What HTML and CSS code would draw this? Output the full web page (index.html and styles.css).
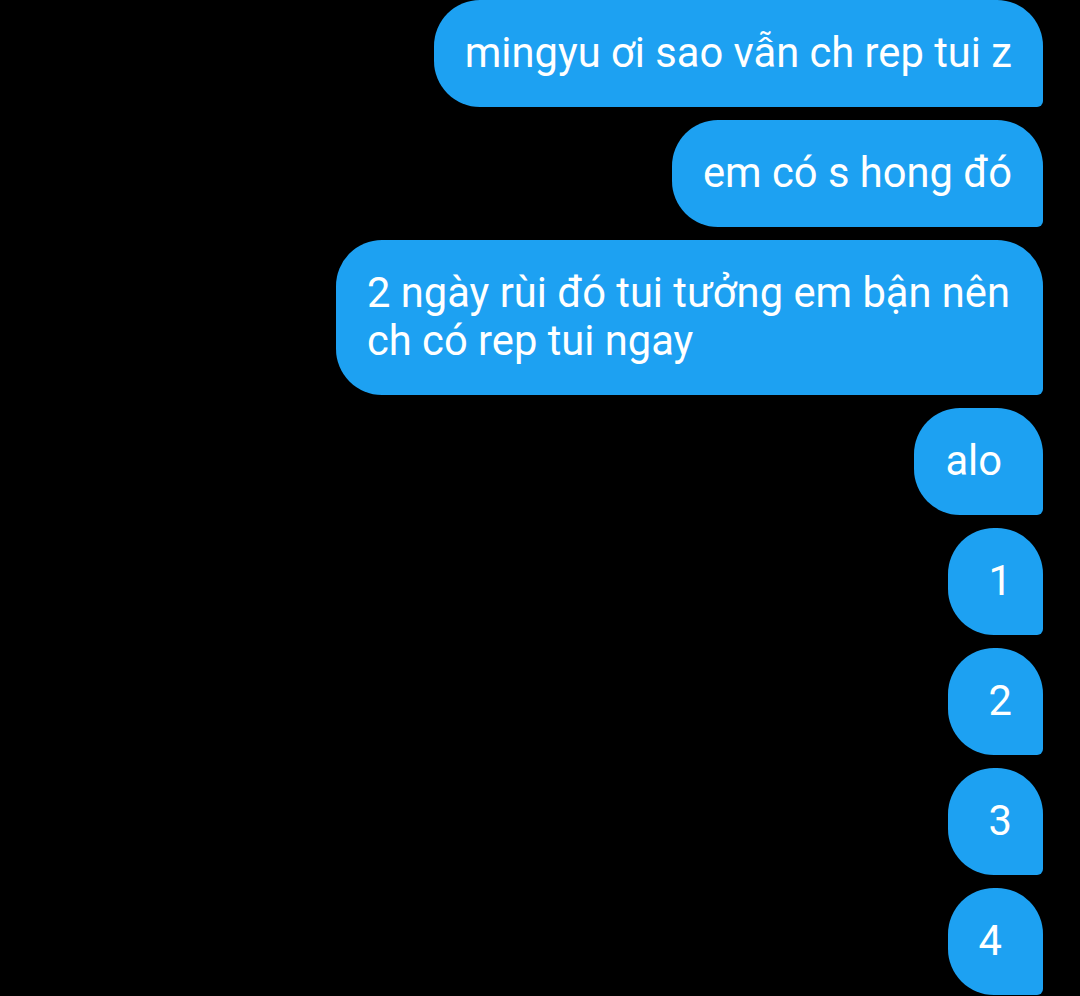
FILE: index.html
```html
<!DOCTYPE html>
<html lang="vi">
<head>
<meta charset="utf-8">
<link rel="stylesheet" href="styles.css">
</head>
<body>
<div class="chat">
  <div class="bubble">mingyu ơi sao vẫn ch rep tui z</div>
  <div class="bubble">em có s hong đó</div>
  <div class="bubble">2 ngày rùi đó tui tưởng em bận nên ch có rep tui ngay</div>
  <div class="bubble trail">alo</div>
  <div class="bubble lead">1</div>
  <div class="bubble lead">2</div>
  <div class="bubble lead">3</div>
  <div class="bubble trail">4</div>
</div>
</body>
</html>
```

FILE: styles.css
```css
html, body {
  margin: 0;
  padding: 0;
  background: #000;
}
body {
  width: 1080px;
  height: 996px;
  overflow: hidden;
}
.chat {
  display: flex;
  flex-direction: column;
  align-items: flex-end;
  gap: 13px;
  padding: 0 37px 0 0;
}
.bubble {
  box-sizing: border-box;
  max-width: 707px;
  min-height: 107px;
  padding: 29px 31px 30px 31px;
  background: #1da1f2;
  color: #fff;
  font-family: Roboto, "Noto Sans", sans-serif;
  font-size: 41.7px;
  line-height: 48px;
  text-align: left;
  border-radius: 46px 46px 6px 46px;
}
.bubble.trail {
  padding-right: 41px;
}
.bubble.lead {
  padding-left: 41px;
}
```
